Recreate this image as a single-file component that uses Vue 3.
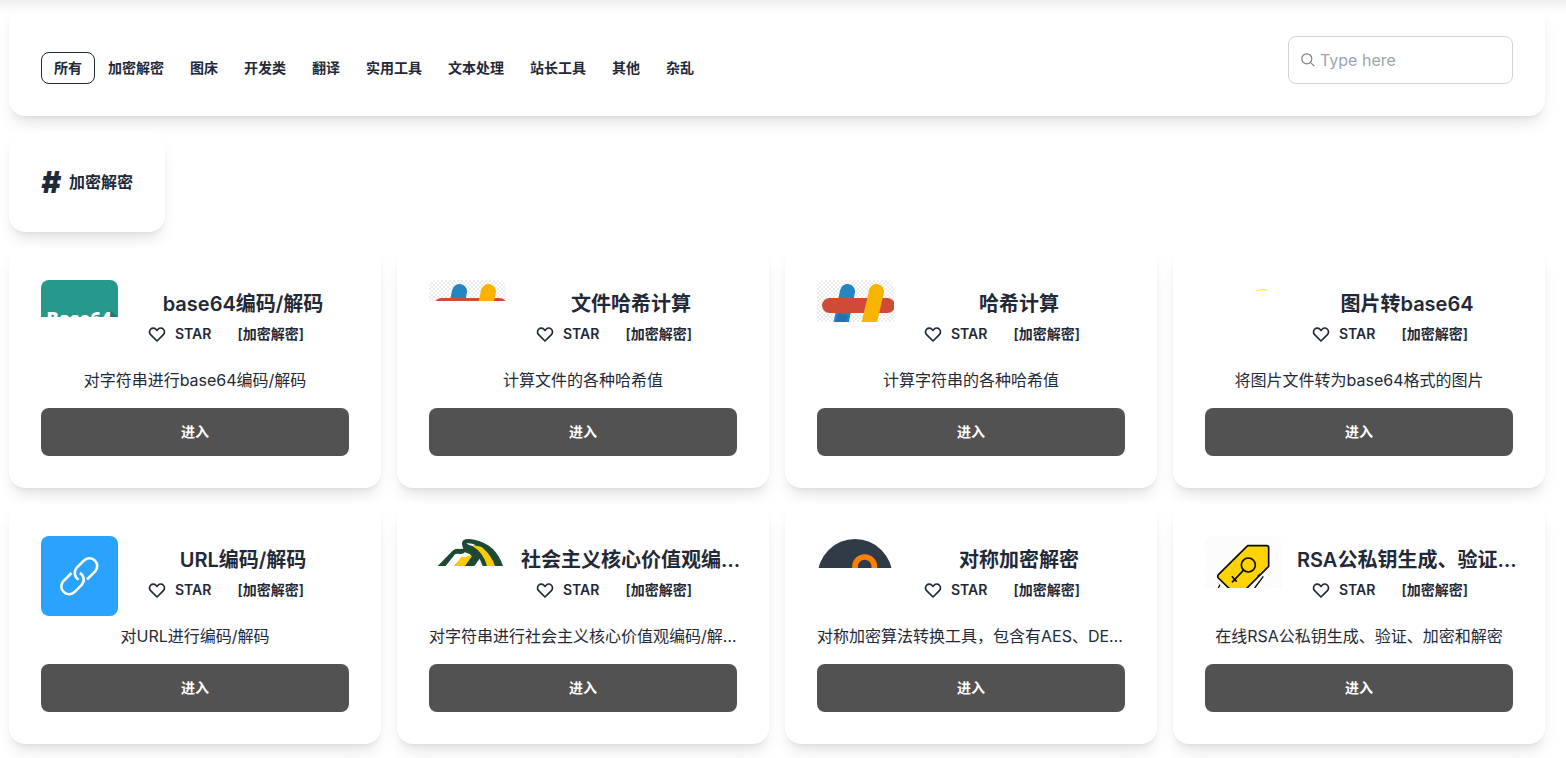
<template>
  <div class="page">
    <header class="navbar"></header>

    <section class="card filter">
      <nav class="categories">
        <button
          v-for="item in categories"
          :key="item"
          class="btn category"
          :class="{ active: item === current }"
          @click="current = item"
        >{{ item }}</button>
      </nav>
      <label class="search">
        <svg class="search-icon" viewBox="0 0 14 14" aria-hidden="true">
          <circle cx="5.8" cy="5.8" r="5" />
          <path d="M9.4 9.4 13.2 13.2" />
        </svg>
        <input v-model="keyword" type="text" placeholder="Type here" aria-label="Type here" />
      </label>
    </section>

    <h2 class="card group-title">
      <span class="hash">#</span>
      <span>加密解密</span>
    </h2>

    <main class="tools">
      <article v-for="tool in tools" :key="tool.name" class="card tool">
        <div class="tool-head">
          <div class="thumb" :class="{ full: tool.icon === 'link' }">
            <svg v-if="tool.icon === 'base64'" viewBox="0 0 77 37">
              <rect width="77" height="37" fill="#26998b" />
              <path d="M70 31 77 37H66Z" fill="#1c7d72" />
              <text x="38" y="45" class="thumb-text" text-anchor="middle">Base64</text>
            </svg>
            <svg v-else-if="tool.icon === 'file-hash' || tool.icon === 'hash'" :viewBox="tool.icon === 'hash' ? '0 0 77 42' : '0 0 77 21'">
              <defs>
                <pattern :id="tool.icon" width="4" height="4" patternUnits="userSpaceOnUse">
                  <path d="M0 0H2V2H0ZM2 2H4V4H2Z" fill="#ededed" />
                </pattern>
              </defs>
              <rect width="77" height="42" :fill="'url(#' + tool.icon + ')'" />
              <g fill="none" stroke-width="15" stroke-linecap="round">
                <path d="M30.5 11.5 23 48" stroke="#2485c2" />
                <path d="M22 33 31 36 29 42H18Z" fill="#1f74ad" stroke="none" />
                <path d="M12.5 25.5H70.5" stroke="#d04a38" />
                <path d="M59.5 11.5 51 48" stroke="#f8b400" />
              </g>
            </svg>
            <svg v-else-if="tool.icon === 'image'" viewBox="0 0 77 20">
              <path d="M51 10.7Q54 9.6 62 10.2" fill="none" stroke="#f5f032" stroke-width="1.2" />
              <path d="M56 9.5H60" stroke="#d8dcc0" stroke-width="0.6" />
            </svg>
            <svg v-else-if="tool.icon === 'link'" viewBox="0 0 77 80">
              <rect width="77" height="80" fill="#2aa3ff" />
              <g fill="none" stroke="#fff" stroke-width="2.6">
                <path d="M46 43.5 54.3 35.2A7.8 7.8 0 0 0 43.3 24.2L35.8 31.7A7.8 7.8 0 0 0 37.6 43.6" />
                <path d="M30.5 37 22.2 45.3A7.8 7.8 0 0 0 33.2 56.3L40.7 48.8A7.8 7.8 0 0 0 38.8 36.8" />
              </g>
            </svg>
            <svg v-else-if="tool.icon === 'mountain'" viewBox="87 48 231 90">
              <path d="M113 138 157 93Q166 84 178 87L190 86Q182 69 190 61Q199 54 224 59Q288 73 309 138Z" fill="#1e4a35" />
              <path d="M137 138 165 103Q170 100 180 102 190 103 194 97 200 99 209 102L214 107 197 114 187 110 163 138Z" fill="#fff" />
              <path d="M163 138 184 112Q188 108 197 112L207 106 216 108 195 138Z" fill="#fbcb07" />
              <path d="M199 70Q214 68 228 76L218 78Q207 78 199 70Z" fill="#fff" />
              <path d="M217 78Q239 75 251 86Q274 106 285 138H261Q251 98 217 78Z" fill="#fbcb07" />
              <path d="M239 116 248 138H223Z" fill="#fff" />
            </svg>
            <svg v-else-if="tool.icon === 'disc'" viewBox="81 48 231 96">
              <circle cx="195" cy="169" r="112" fill="#303b47" />
              <circle cx="224" cy="140" r="29" fill="none" stroke="#ff8000" stroke-width="17" />
            </svg>
            <svg v-else viewBox="75 48 231 156">
              <defs>
                <pattern id="hatch" width="9" height="9" patternUnits="userSpaceOnUse">
                  <path d="M-1 10 10 -1" stroke="#ededed" stroke-width="1.5" />
                </pattern>
              </defs>
              <rect x="75" y="48" width="231" height="156" fill="url(#hatch)" />
              <g fill="none" stroke="#0b0b0b" stroke-width="5" stroke-linejoin="round">
                <path d="M203 77H260Q266 77 266 83V139L174 231 115 174Q111 169 116 163Z" fill="#ffd400" />
                <circle cx="205" cy="135" r="21" />
                <path d="M190 151 156 187M163 176 170 185M156 169 163 178" />
                <path d="M250 169 224 204M232 170 240 162M120 194 115 204" stroke-width="4" />
              </g>
            </svg>
          </div>
          <div class="tool-info">
            <h3 class="tool-name">{{ tool.name }}</h3>
            <div class="tool-actions">
              <button class="btn star">
                <svg viewBox="0 0 24 24" aria-hidden="true">
                  <path d="M4.318 6.318a4.5 4.5 0 000 6.364L12 20.364l7.682-7.682a4.5 4.5 0 00-6.364-6.364L12 7.636l-1.318-1.318a4.5 4.5 0 00-6.364 0z" />
                </svg>
                STAR
              </button>
              <button class="btn">[加密解密]</button>
            </div>
          </div>
        </div>
        <p class="tool-desc">{{ tool.desc }}</p>
        <button class="enter">进入</button>
      </article>
    </main>
  </div>
</template>

<script setup>
import { ref } from 'vue';

const categories = ['所有', '加密解密', '图床', '开发类', '翻译', '实用工具', '文本处理', '站长工具', '其他', '杂乱'];
const current = ref('所有');
const keyword = ref('');

const tools = [
  { name: 'base64编码/解码', desc: '对字符串进行base64编码/解码', icon: 'base64' },
  { name: '文件哈希计算', desc: '计算文件的各种哈希值', icon: 'file-hash' },
  { name: '哈希计算', desc: '计算字符串的各种哈希值', icon: 'hash' },
  { name: '图片转base64', desc: '将图片文件转为base64格式的图片', icon: 'image' },
  { name: 'URL编码/解码', desc: '对URL进行编码/解码', icon: 'link' },
  { name: '社会主义核心价值观编码/解码', desc: '对字符串进行社会主义核心价值观编码/解码', icon: 'mountain' },
  { name: '对称加密解密', desc: '对称加密算法转换工具，包含有AES、DES、RC4等', icon: 'disc' },
  { name: 'RSA公私钥生成、验证、加解密', desc: '在线RSA公私钥生成、验证、加密和解密', icon: 'key' }
];
</script>

<style>
body {
  margin: 0;
  background-color: #fff;
}
</style>

<style scoped>
.page {
  display: flex;
  flex-direction: column;
  align-items: flex-start;
  gap: 16px;
  padding: 4px 21px 16px 9px;
  color: #1f2937;
  font-family: Inter, "Noto Sans CJK SC", sans-serif;
  font-size: 16px;
  line-height: 24px;
}

.page * {
  box-sizing: border-box;
}

button,
input {
  font-family: inherit;
  color: inherit;
}

/* 顶部导航的阴影 */
.navbar {
  position: fixed;
  top: -64px;
  left: -16px;
  right: -16px;
  height: 64px;
  z-index: 10;
  box-shadow: 0 8px 12px -3px rgba(0, 0, 0, 0.08);
}

.card {
  padding: 32px;
  border-radius: 16px;
  background-color: #fff;
  box-shadow: 0 10px 15px -3px rgba(0, 0, 0, 0.1), 0 4px 6px -4px rgba(0, 0, 0, 0.1);
}

.filter {
  display: flex;
  align-items: flex-end;
  justify-content: space-between;
  align-self: stretch;
}

.categories {
  display: flex;
  flex-wrap: wrap;
}

.btn {
  display: inline-flex;
  align-items: center;
  height: 32px;
  padding: 0 12px;
  border: 1px solid transparent;
  border-radius: 8px;
  background: transparent;
  font-size: 14px;
  font-weight: 600;
  line-height: 14px;
  white-space: nowrap;
  cursor: pointer;
}

.btn.active {
  border-color: #1f2937;
}

.search {
  display: flex;
  align-items: center;
  gap: 5px;
  width: 225px;
  height: 48px;
  padding: 0 12px;
  border: 1px solid #d2d4d7;
  border-radius: 8px;
}

.search-icon {
  flex: none;
  width: 14px;
  height: 14px;
  fill: none;
  stroke: #7b8087;
  stroke-width: 1.2;
}

.search input {
  flex: 1;
  min-width: 0;
  padding: 0;
  border: none;
  outline: none;
  background: transparent;
  font-size: 16px;
  line-height: 24px;
}

.search input::placeholder {
  color: #9ca3af;
  opacity: 1;
}

.group-title {
  display: flex;
  align-items: center;
  gap: 8px;
  margin: 0;
  font-size: 16px;
  font-weight: 600;
}

.hash {
  font-size: 30px;
  font-style: italic;
  font-weight: 900;
  line-height: 36px;
}

.tools {
  display: grid;
  grid-template-columns: repeat(4, minmax(0, 1fr));
  gap: 16px;
  width: 100%;
}

.tool {
  display: flex;
  flex-direction: column;
}

.tool-head {
  display: grid;
  grid-template-columns: minmax(0, 1fr) minmax(0, 3fr);
  height: 80px;
}

.thumb {
  align-self: start;
  overflow: hidden;
  border-radius: 8px 8px 0 0;
}

.thumb.full {
  border-radius: 8px;
}

.thumb svg {
  display: block;
  width: 100%;
}

.thumb-text {
  fill: #fff;
  font-family: "Open Sans", sans-serif;
  font-size: 18px;
  font-weight: 800;
}

.tool-info {
  align-self: center;
  padding-left: 16px;
}

/* 标题两侧略微外扩，给省略号留出空间 */
.tool-name {
  overflow: hidden;
  margin: 0 -4px 0 -1px;
  font-size: 20px;
  font-weight: 600;
  line-height: 28px;
  text-align: center;
  text-overflow: ellipsis;
  white-space: nowrap;
}

.tool-actions {
  display: flex;
}

.star {
  gap: 8px;
}

.star svg {
  width: 20px;
  height: 20px;
  fill: none;
  stroke: currentColor;
  stroke-width: 2;
  stroke-linecap: round;
  stroke-linejoin: round;
}

.tool-desc {
  overflow: hidden;
  margin: 8px 0 16px;
  text-align: center;
  text-overflow: ellipsis;
  white-space: nowrap;
}

.enter {
  height: 48px;
  padding: 0 0 2px;
  border: none;
  border-radius: 8px;
  background-color: #525252;
  color: #fff;
  font-size: 14px;
  font-weight: 600;
  cursor: pointer;
}
</style>
